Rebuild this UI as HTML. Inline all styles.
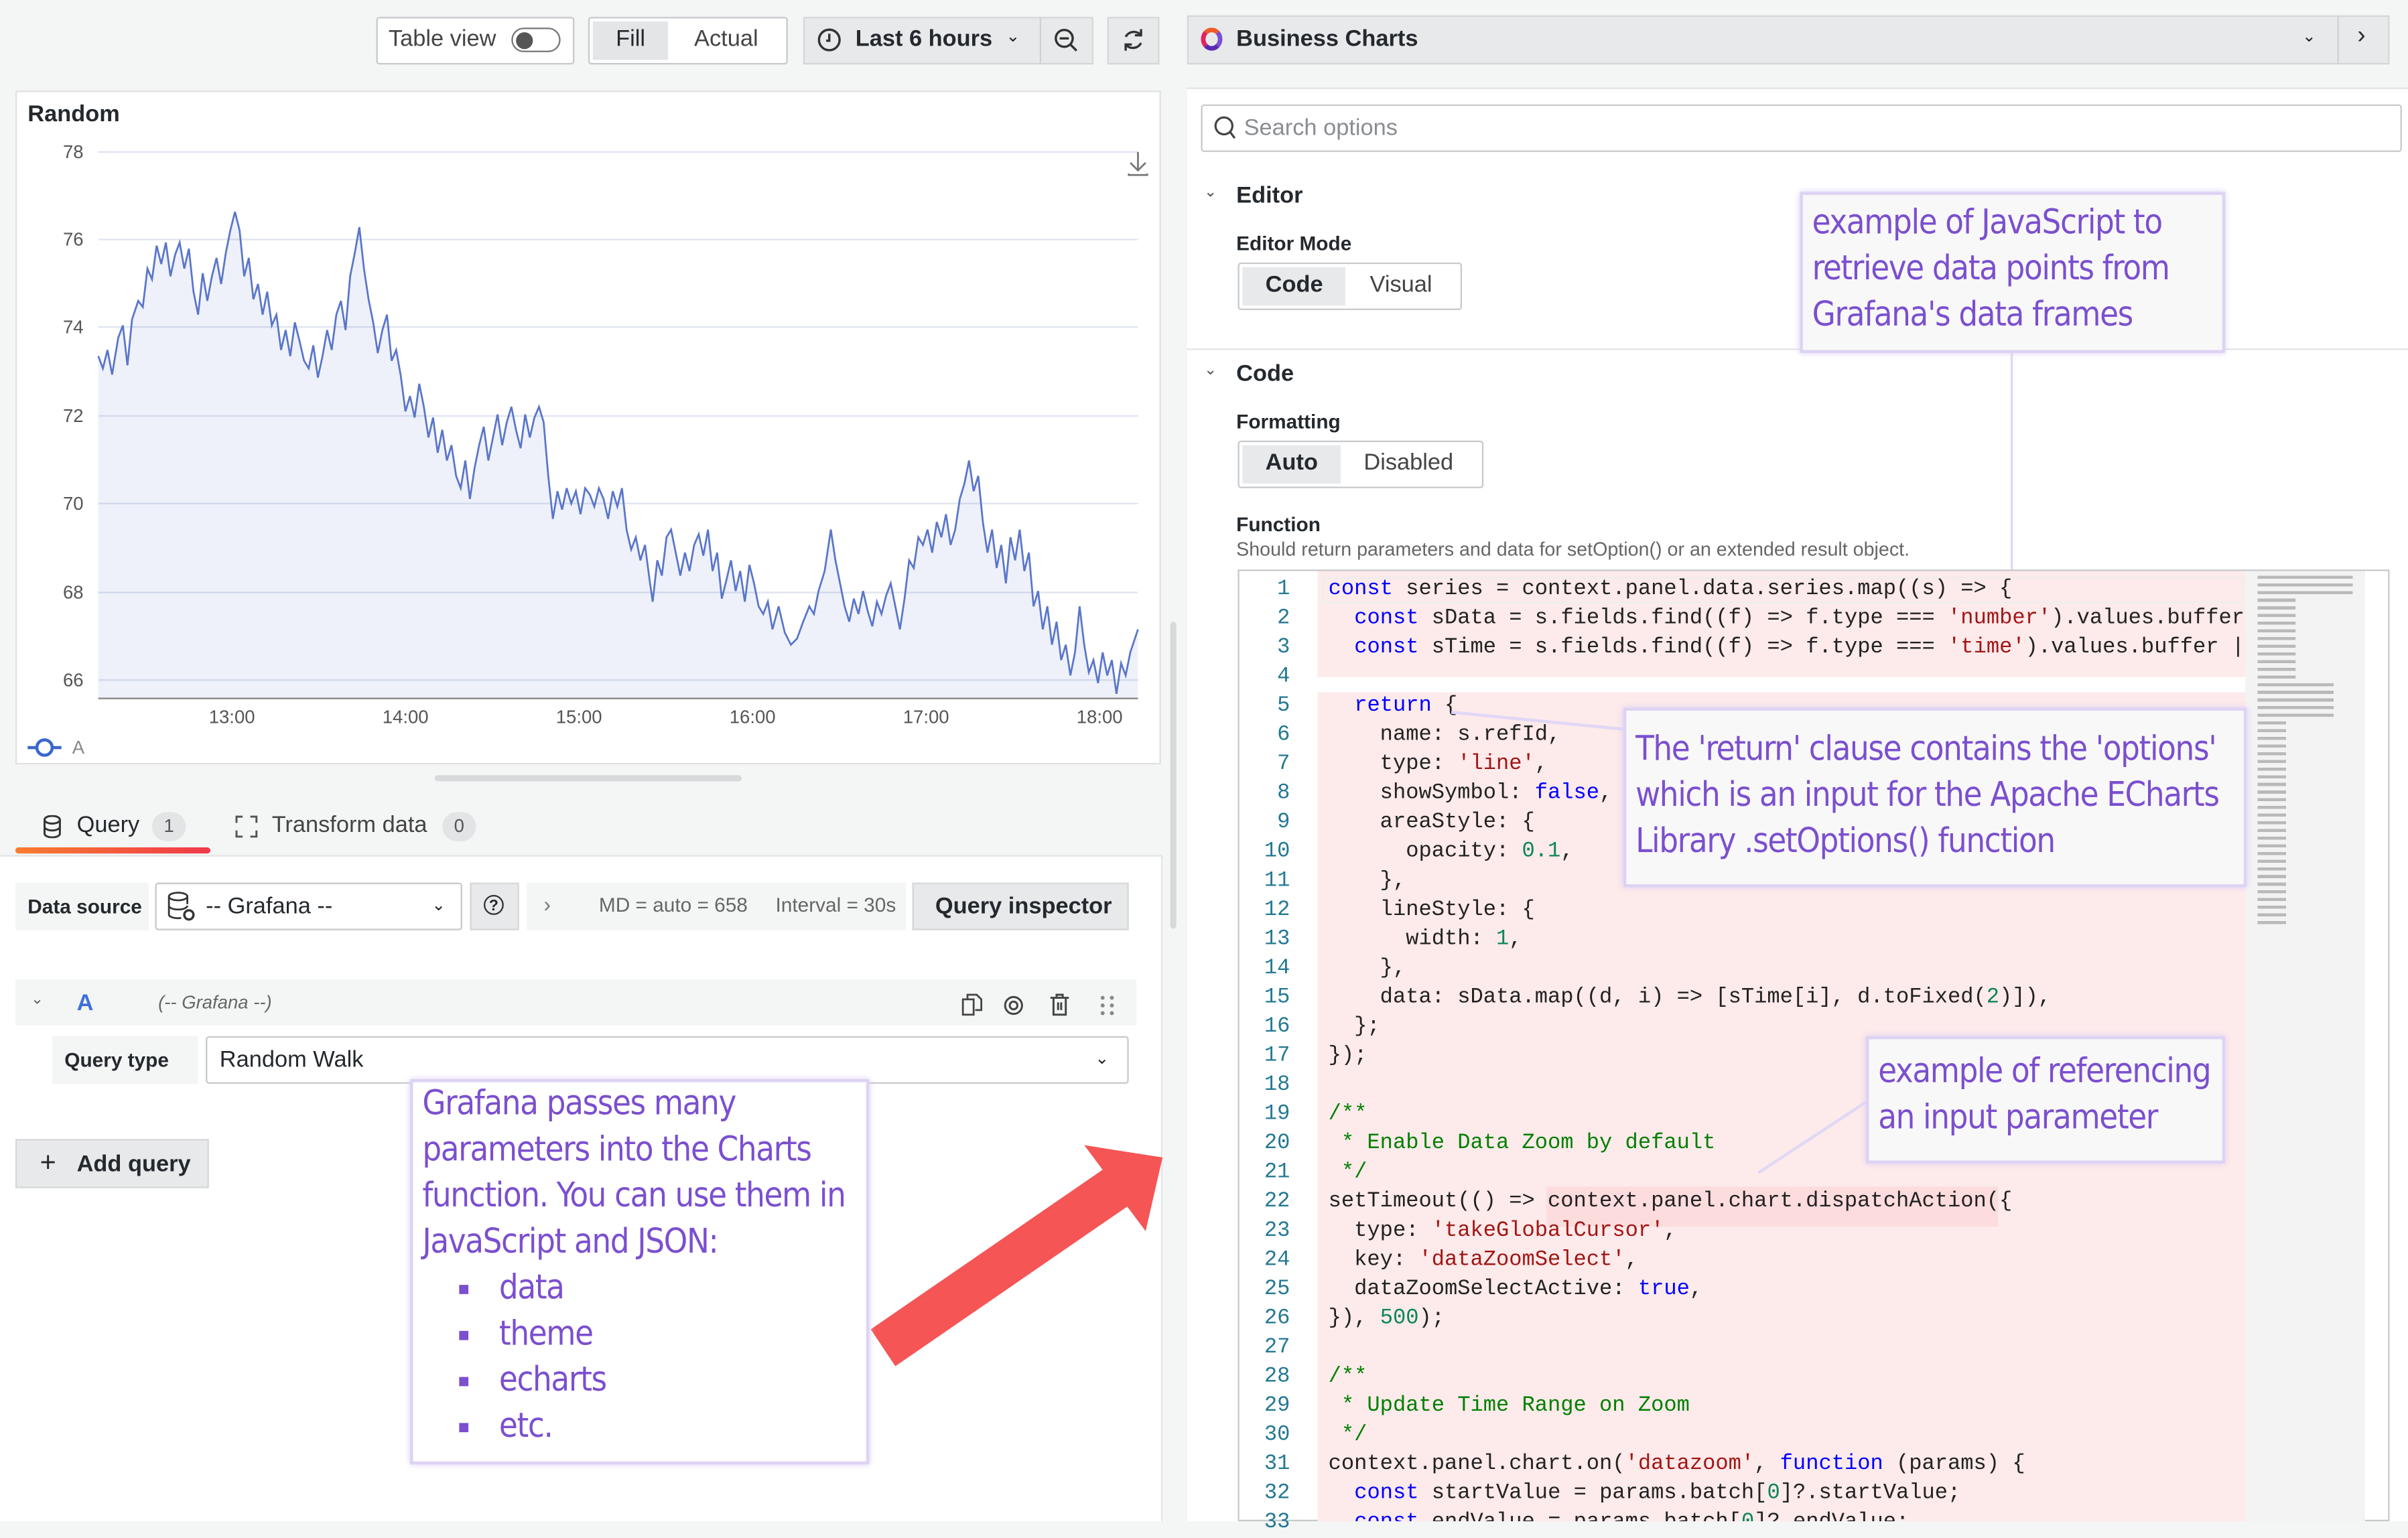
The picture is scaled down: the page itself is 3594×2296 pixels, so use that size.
<!DOCTYPE html>
<html><head><meta charset="utf-8">
<style>
html,body{margin:0;padding:0;width:3594px;height:2271px;overflow:hidden;background:#f4f5f5;}
#w{position:absolute;left:0;top:0;width:1568px;height:991px;transform:scale(2.29209,2.29163);transform-origin:0 0;font-family:"Liberation Sans",sans-serif;color:#24292e;font-size:14px;}
.a{position:absolute;box-sizing:border-box;}
.btn{background:#fff;border:1px solid #c7c9cc;border-radius:2px;}
.gb{background:#e8e9eb;border:1px solid #d6d7d9;}
.t{position:absolute;white-space:nowrap;}
.note{position:absolute;box-sizing:border-box;background:#f8f8f8;border:2px solid #ddd3f3;box-shadow:0 0 4px #d9ccf5;color:#7b4fcf;font-family:"DejaVu Sans Condensed","Liberation Sans Narrow","Liberation Sans",sans-serif;font-size:22px;line-height:30px;letter-spacing:-0.6px;padding:4px 6px;}
.code{position:absolute;font-family:"Liberation Mono",monospace;font-size:14px;line-height:19px;white-space:pre;color:#222;}
.ln{position:absolute;left:806px;width:34px;top:375px;text-align:right;font-family:"Liberation Mono",monospace;font-size:14px;line-height:19px;color:#237893;white-space:pre;}
.k{color:#0000ff}.s{color:#a31515}.n{color:#098658}.c{color:#008000}
.bl{display:block;height:30px;padding-left:24px;}
.bl b{display:inline-block;width:6px;height:6px;background:#7b4fcf;margin-right:20px;vertical-align:middle;}
</style></head><body><div id="w">
<!-- top toolbar -->
<div class="a btn" style="left:245px;top:11px;width:129px;height:31px;"></div>
<div class="t" style="left:253px;top:17px;font-size:15px;color:#444;">Table view</div>
<div class="a" style="left:333px;top:18px;width:32px;height:16px;border:1px solid #777;border-radius:9px;background:#fff;"></div>
<div class="a" style="left:336px;top:21px;width:11px;height:11px;border-radius:6px;background:#555;"></div>
<div class="a btn" style="left:383px;top:11px;width:130px;height:31px;"></div>
<div class="a" style="left:386px;top:14px;width:49px;height:25px;background:#e4e5e7;"></div>
<div class="t" style="left:401px;top:17px;font-size:15px;">Fill</div>
<div class="t" style="left:452px;top:17px;font-size:15px;color:#444;">Actual</div>
<div class="a gb" style="left:523px;top:11px;width:189px;height:31px;"></div>
<div class="a" style="left:677px;top:11px;width:1px;height:31px;background:#d0d1d3;"></div>
<svg class="a" style="left:532px;top:18px" width="17" height="17"><circle cx="8" cy="8" r="6.7" fill="none" stroke="#333" stroke-width="1.5"/><path d="M8 4 V8.5 H6" fill="none" stroke="#333" stroke-width="1.5"/></svg>
<div class="t" style="left:557px;top:17px;font-size:15px;font-weight:600;">Last 6 hours</div>
<div class="t" style="left:655px;top:17px;font-size:11px;">&#8964;</div>
<svg class="a" style="left:686px;top:18px" width="16" height="16"><circle cx="7" cy="7" r="5.5" fill="none" stroke="#333" stroke-width="1.5"/><line x1="4" y1="7" x2="10" y2="7" stroke="#333" stroke-width="1.5"/><line x1="11" y1="11" x2="15" y2="15" stroke="#333" stroke-width="1.5"/></svg>
<div class="a gb" style="left:721px;top:11px;width:34px;height:31px;"></div>
<svg class="a" style="left:730px;top:18px" width="16" height="16"><path d="M3 6 A6 6 0 0 1 13 5 M13 10 A6 6 0 0 1 3 11" fill="none" stroke="#333" stroke-width="1.5"/><path d="M13 1 V5 H9 M3 15 V11 H7" fill="none" stroke="#333" stroke-width="1.5"/></svg>
<div class="a gb" style="left:773px;top:10px;width:783px;height:32px;"></div>
<div class="a" style="left:1522px;top:10px;width:1px;height:32px;background:#d0d1d3;"></div>
<div class="a" style="left:782px;top:18px;width:14px;height:15px;border-radius:50%;border:3px solid;border-color:#f05a28 #7b4fcf #5a2ab5 #e0245e;"></div>
<div class="t" style="left:805px;top:17px;font-size:15px;font-weight:600;">Business Charts</div>
<div class="t" style="left:1499px;top:17px;font-size:11px;">&#8964;</div>
<div class="t" style="left:1535px;top:15px;font-size:16px;">&#8250;</div>

<!-- chart panel -->
<div class="a" style="left:10px;top:59px;width:746px;height:439px;background:#fff;border:1px solid #e0e1e3;"></div>
<div class="t" style="left:18px;top:66px;font-size:15px;font-weight:600;">Random</div>
<svg class="a" style="left:0;top:0" width="760" height="500">
<g stroke="#dfe4ef" stroke-width="1">
<line x1="64" y1="99" x2="741" y2="99"/><line x1="64" y1="156" x2="741" y2="156"/><line x1="64" y1="213" x2="741" y2="213"/><line x1="64" y1="271" x2="741" y2="271"/><line x1="64" y1="328" x2="741" y2="328"/><line x1="64" y1="386" x2="741" y2="386"/><line x1="64" y1="443" x2="741" y2="443"/></g>
<g font-family="Liberation Sans" font-size="12" fill="#555"><text x="41" y="103">78</text><text x="41" y="160">76</text><text x="41" y="217">74</text><text x="41" y="275">72</text><text x="41" y="332">70</text><text x="41" y="390">68</text><text x="41" y="447">66</text>
<text x="136" y="471">13:00</text><text x="249" y="471">14:00</text><text x="362" y="471">15:00</text><text x="475" y="471">16:00</text><text x="588" y="471">17:00</text><text x="701" y="471">18:00</text></g>
<path d="M64,232 L67,240 L70,228 L73,244 L77,220 L80,212 L83,238 L86,208 L90,196 L93,200 L96,175 L99,182 L102,160 L105,172 L108,158 L111,180 L114,166 L117,158 L120,175 L123,162 L126,190 L129,205 L132,178 L135,196 L138,180 L141,168 L144,185 L147,165 L150,150 L153,138 L156,150 L159,180 L162,168 L165,195 L168,185 L171,205 L174,190 L177,212 L180,205 L183,228 L186,215 L189,232 L192,210 L195,222 L198,235 L201,240 L204,225 L207,246 L210,232 L213,215 L216,228 L219,205 L222,196 L225,215 L228,180 L231,165 L234,148 L237,175 L240,195 L243,210 L246,230 L249,215 L252,205 L255,235 L258,228 L261,245 L264,268 L267,258 L270,272 L273,250 L276,265 L279,285 L282,272 L285,295 L288,280 L291,300 L294,290 L297,310 L300,318 L303,300 L306,325 L309,305 L312,290 L315,278 L318,300 L321,285 L324,270 L327,290 L330,275 L333,265 L336,280 L339,292 L342,270 L345,285 L348,272 L351,265 L354,275 L357,310 L360,338 L363,320 L366,332 L369,318 L372,328 L375,320 L378,335 L381,318 L384,322 L387,330 L390,318 L393,325 L396,338 L399,320 L402,330 L405,318 L408,345 L411,358 L414,350 L417,365 L420,355 L423,378 L425,392 L428,365 L431,375 L434,350 L437,345 L440,360 L443,375 L446,360 L449,372 L452,355 L455,348 L458,362 L461,345 L464,372 L467,360 L470,390 L473,378 L476,365 L479,385 L482,372 L485,392 L488,368 L491,380 L494,395 L497,400 L500,392 L503,410 L507,395 L511,412 L515,420 L519,416 L523,405 L527,395 L530,400 L533,385 L537,372 L541,345 L544,365 L547,380 L550,395 L553,405 L556,390 L559,400 L562,385 L565,398 L568,408 L571,392 L574,400 L577,388 L580,380 L583,395 L586,410 L589,390 L592,365 L595,370 L598,350 L601,355 L604,345 L607,360 L610,340 L613,350 L616,335 L619,355 L622,345 L625,325 L628,315 L631,300 L634,320 L637,310 L640,340 L643,360 L646,345 L649,370 L652,355 L655,380 L658,350 L661,365 L664,345 L667,372 L670,360 L673,395 L676,385 L679,410 L682,395 L685,420 L688,405 L691,430 L694,420 L697,440 L700,425 L703,395 L706,420 L709,438 L712,430 L715,445 L718,425 L721,440 L724,430 L727,452 L730,432 L733,440 L736,425 L741,410 L741,455 L64,455Z" fill="#5a76c9" fill-opacity="0.1" stroke="none"/>
<path d="M64,232 L67,240 L70,228 L73,244 L77,220 L80,212 L83,238 L86,208 L90,196 L93,200 L96,175 L99,182 L102,160 L105,172 L108,158 L111,180 L114,166 L117,158 L120,175 L123,162 L126,190 L129,205 L132,178 L135,196 L138,180 L141,168 L144,185 L147,165 L150,150 L153,138 L156,150 L159,180 L162,168 L165,195 L168,185 L171,205 L174,190 L177,212 L180,205 L183,228 L186,215 L189,232 L192,210 L195,222 L198,235 L201,240 L204,225 L207,246 L210,232 L213,215 L216,228 L219,205 L222,196 L225,215 L228,180 L231,165 L234,148 L237,175 L240,195 L243,210 L246,230 L249,215 L252,205 L255,235 L258,228 L261,245 L264,268 L267,258 L270,272 L273,250 L276,265 L279,285 L282,272 L285,295 L288,280 L291,300 L294,290 L297,310 L300,318 L303,300 L306,325 L309,305 L312,290 L315,278 L318,300 L321,285 L324,270 L327,290 L330,275 L333,265 L336,280 L339,292 L342,270 L345,285 L348,272 L351,265 L354,275 L357,310 L360,338 L363,320 L366,332 L369,318 L372,328 L375,320 L378,335 L381,318 L384,322 L387,330 L390,318 L393,325 L396,338 L399,320 L402,330 L405,318 L408,345 L411,358 L414,350 L417,365 L420,355 L423,378 L425,392 L428,365 L431,375 L434,350 L437,345 L440,360 L443,375 L446,360 L449,372 L452,355 L455,348 L458,362 L461,345 L464,372 L467,360 L470,390 L473,378 L476,365 L479,385 L482,372 L485,392 L488,368 L491,380 L494,395 L497,400 L500,392 L503,410 L507,395 L511,412 L515,420 L519,416 L523,405 L527,395 L530,400 L533,385 L537,372 L541,345 L544,365 L547,380 L550,395 L553,405 L556,390 L559,400 L562,385 L565,398 L568,408 L571,392 L574,400 L577,388 L580,380 L583,395 L586,410 L589,390 L592,365 L595,370 L598,350 L601,355 L604,345 L607,360 L610,340 L613,350 L616,335 L619,355 L622,345 L625,325 L628,315 L631,300 L634,320 L637,310 L640,340 L643,360 L646,345 L649,370 L652,355 L655,380 L658,350 L661,365 L664,345 L667,372 L670,360 L673,395 L676,385 L679,410 L682,395 L685,420 L688,405 L691,430 L694,420 L697,440 L700,425 L703,395 L706,420 L709,438 L712,430 L715,445 L718,425 L721,440 L724,430 L727,452 L730,432 L733,440 L736,425 L741,410" fill="none" stroke="#5a76c9" stroke-width="1.2"/>
<line x1="64" y1="455" x2="741" y2="455" stroke="#888" stroke-width="1"/>
<line x1="18" y1="487" x2="40" y2="487" stroke="#3a66cc" stroke-width="2"/><circle cx="29" cy="487" r="5" fill="#fff" stroke="#3a66cc" stroke-width="2"/>
<text x="47" y="491" font-family="Liberation Sans" font-size="12" fill="#888">A</text>
<path d="M741 99 V111 M736 106 L741 111 L746 106 M735 113 V114 H747 V113" fill="none" stroke="#777" stroke-width="1.2"/>
</svg>
<div class="a" style="left:283px;top:505px;width:200px;height:4px;border-radius:2px;background:#d8d9db;"></div>
<div class="a" style="left:762px;top:405px;width:4px;height:200px;border-radius:2px;background:#d8d9db;"></div>

<!-- tabs -->
<svg class="a" style="left:28px;top:531px" width="12" height="15"><ellipse cx="6" cy="3" rx="5" ry="2.5" fill="none" stroke="#333" stroke-width="1.3"/><path d="M1 3 V12 A5 2.5 0 0 0 11 12 V3 M1 7.5 A5 2.5 0 0 0 11 7.5" fill="none" stroke="#333" stroke-width="1.3"/></svg>
<div class="t" style="left:50px;top:529px;font-size:15px;">Query</div>
<div class="a" style="left:99px;top:529px;width:22px;height:19px;border-radius:10px;background:#e3e4e6;font-size:12px;text-align:center;line-height:19px;color:#555;">1</div>
<div class="a" style="left:10px;top:552px;width:127px;height:4px;background:linear-gradient(90deg,#f77c2f,#f0394a);border-radius:2px;"></div>
<svg class="a" style="left:153px;top:531px" width="15" height="15"><path d="M1 5 V1 H5 M10 1 H14 V5 M14 10 V14 H10 M5 14 H1 V10" fill="none" stroke="#555" stroke-width="1.3"/></svg>
<div class="t" style="left:177px;top:529px;font-size:15px;color:#444;">Transform data</div>
<div class="a" style="left:288px;top:529px;width:22px;height:19px;border-radius:10px;background:#e3e4e6;font-size:12px;text-align:center;line-height:19px;color:#555;">0</div>
<div class="a" style="left:0;top:557px;width:757px;height:434px;background:#fff;border-top:1px solid #e3e4e6;border-right:1px solid #e3e4e6;"></div>

<!-- datasource row -->
<div class="a" style="left:10px;top:575px;width:87px;height:31px;background:#f4f5f5;"></div>
<div class="t" style="left:18px;top:583px;font-size:13px;font-weight:600;">Data source</div>
<div class="a btn" style="left:101px;top:575px;width:200px;height:31px;"></div>
<svg class="a" style="left:108px;top:580px" width="22" height="22"><ellipse cx="8" cy="4" rx="6" ry="2.5" fill="none" stroke="#333" stroke-width="1.2"/><path d="M2 4 V16 A6 2.5 0 0 0 10 18 M14 4 V9 M2 10 A6 2.5 0 0 0 14 10" fill="none" stroke="#333" stroke-width="1.2"/><circle cx="15" cy="16" r="3" fill="none" stroke="#333" stroke-width="1.5"/></svg>
<div class="t" style="left:134px;top:582px;font-size:15px;">-- Grafana --</div>
<div class="t" style="left:281px;top:583px;font-size:11px;">&#8964;</div>
<div class="a gb" style="left:306px;top:575px;width:32px;height:31px;"></div>
<div class="a" style="left:315px;top:583px;width:13px;height:13px;border:1.4px solid #333;border-radius:50%;font-size:10px;text-align:center;line-height:13px;font-weight:bold;">?</div>
<div class="a" style="left:343px;top:575px;width:247px;height:31px;background:#f4f5f5;"></div>
<div class="t" style="left:354px;top:581px;font-size:14px;color:#777;">&#8250;</div>
<div class="t" style="left:390px;top:582px;font-size:13px;color:#666;">MD = auto = 658</div>
<div class="t" style="left:505px;top:582px;font-size:13px;color:#666;">Interval = 30s</div>
<div class="a gb" style="left:594px;top:575px;width:141px;height:31px;"></div>
<div class="t" style="left:609px;top:582px;font-size:15px;font-weight:600;">Query inspector</div>

<!-- query A -->
<div class="a" style="left:10px;top:638px;width:730px;height:30px;background:#f4f5f5;"></div>
<div class="t" style="left:20px;top:646px;font-size:10px;color:#666;">&#8964;</div>
<div class="t" style="left:50px;top:645px;font-size:15px;color:#3d71d9;font-weight:600;">A</div>
<div class="t" style="left:103px;top:646px;font-size:12px;color:#666;font-style:italic;">(-- Grafana --)</div>
<svg class="a" style="left:626px;top:647px" width="14" height="15"><path d="M4 4 V1 H10 L13 4 V11 H9 M1 4 H8 V14 H1 Z" fill="none" stroke="#444" stroke-width="1.2"/></svg>
<svg class="a" style="left:653px;top:648px" width="14" height="14"><circle cx="7" cy="7" r="5.5" fill="none" stroke="#444" stroke-width="1.3"/><circle cx="7" cy="7" r="2.5" fill="none" stroke="#444" stroke-width="1.3"/></svg>
<svg class="a" style="left:683px;top:647px" width="14" height="15"><path d="M1 3 H13 M5 3 V1 H9 V3 M3 3 V14 H11 V3 M6 6 V11 M8 6 V11" fill="none" stroke="#444" stroke-width="1.3"/></svg>
<svg class="a" style="left:716px;top:648px" width="10" height="15"><g fill="#888"><circle cx="2" cy="2" r="1.3"/><circle cx="8" cy="2" r="1.3"/><circle cx="2" cy="7" r="1.3"/><circle cx="8" cy="7" r="1.3"/><circle cx="2" cy="12" r="1.3"/><circle cx="8" cy="12" r="1.3"/></g></svg>
<div class="a" style="left:34px;top:675px;width:95px;height:31px;background:#f4f5f5;"></div>
<div class="t" style="left:42px;top:683px;font-size:13px;font-weight:600;">Query type</div>
<div class="a btn" style="left:134px;top:675px;width:601px;height:31px;"></div>
<div class="t" style="left:143px;top:682px;font-size:15px;">Random Walk</div>
<div class="t" style="left:713px;top:683px;font-size:11px;">&#8964;</div>
<div class="a gb" style="left:10px;top:742px;width:126px;height:32px;"></div>
<div class="t" style="left:26px;top:747px;font-size:18px;">+</div>
<div class="t" style="left:50px;top:750px;font-size:15px;font-weight:600;">Add query</div>

<!-- right panel -->
<div class="a" style="left:773px;top:57px;width:795px;height:934px;background:#fff;border-top:1px solid #e3e4e6;"></div>
<div class="a btn" style="left:782px;top:68px;width:782px;height:31px;"></div>
<svg class="a" style="left:790px;top:75px" width="16" height="17"><circle cx="7" cy="7" r="5.5" fill="none" stroke="#444" stroke-width="1.4"/><line x1="11" y1="11" x2="14" y2="15" stroke="#444" stroke-width="1.4"/></svg>
<div class="t" style="left:810px;top:75px;font-size:15px;color:#8a8d91;">Search options</div>
<div class="t" style="left:784px;top:120px;font-size:10px;color:#555;">&#8964;</div>
<div class="t" style="left:805px;top:119px;font-size:15px;font-weight:600;">Editor</div>
<div class="t" style="left:805px;top:151px;font-size:13px;font-weight:600;">Editor Mode</div>
<div class="a btn" style="left:806px;top:171px;width:146px;height:31px;"></div>
<div class="a" style="left:809px;top:174px;width:67px;height:25px;background:#e8e9eb;"></div>
<div class="t" style="left:824px;top:177px;font-size:15px;font-weight:600;">Code</div>
<div class="t" style="left:892px;top:177px;font-size:15px;color:#444;">Visual</div>
<div class="a" style="left:773px;top:227px;width:795px;height:1px;background:#e3e4e6;"></div>
<div class="t" style="left:784px;top:236px;font-size:10px;color:#555;">&#8964;</div>
<div class="t" style="left:805px;top:235px;font-size:15px;font-weight:600;">Code</div>
<div class="t" style="left:805px;top:267px;font-size:13px;font-weight:600;">Formatting</div>
<div class="a btn" style="left:806px;top:287px;width:160px;height:31px;"></div>
<div class="a" style="left:809px;top:290px;width:64px;height:25px;background:#e8e9eb;"></div>
<div class="t" style="left:824px;top:293px;font-size:15px;font-weight:600;">Auto</div>
<div class="t" style="left:888px;top:293px;font-size:15px;color:#444;">Disabled</div>
<div class="t" style="left:805px;top:334px;font-size:13px;font-weight:600;">Function</div>
<div class="t" style="left:805px;top:351px;font-size:12.5px;color:#666;">Should return parameters and data for setOption() or an extended result object.</div>

<!-- code editor -->
<div class="a" style="left:806px;top:371px;width:750px;height:620px;background:#fff;border:1px solid #c7c9cc;"></div>
<div class="a" style="left:858px;top:372px;width:604px;height:69px;background:#fdeaea;"></div>
<div class="a" style="left:858px;top:451px;width:604px;height:540px;background:#fdeaea;"></div>
<div class="a" style="left:1007px;top:773px;width:294px;height:26px;background:#fcdcdc;"></div>
<div class="a" style="left:861px;top:376px;width:600px;height:17px;border:1px solid #eee;"></div>
<div class="a" style="left:1462px;top:372px;width:78px;height:619px;background:#f3f3f3;"></div>
<div class="a" style="left:1470px;top:375px;width:62px;height:230px;background:repeating-linear-gradient(180deg,#8a8a8a 0 2px,transparent 2px 5px);opacity:.55;clip-path:polygon(0 0,100% 0,100% 6%,40% 6%,40% 30%,80% 30%,80% 40%,30% 40%,30% 100%,0 100%);"></div>
<div class="ln">1
2
3
4
5
6
7
8
9
10
11
12
13
14
15
16
17
18
19
20
21
22
23
24
25
26
27
28
29
30
31
32
33</div>
<div class="a" style="left:858px;top:372px;width:604px;height:619px;overflow:hidden;"><div class="code" style="left:7px;top:3px;"><span class="k">const</span> series = context.panel.data.series.map((s) =&gt; {
  <span class="k">const</span> sData = s.fields.find((f) =&gt; f.type === <span class="s">'number'</span>).values.buffer || 
  <span class="k">const</span> sTime = s.fields.find((f) =&gt; f.type === <span class="s">'time'</span>).values.buffer || 

  <span class="k">return</span> {
    name: s.refId,
    type: <span class="s">'line'</span>,
    showSymbol: <span class="k">false</span>,
    areaStyle: {
      opacity: <span class="n">0.1</span>,
    },
    lineStyle: {
      width: <span class="n">1</span>,
    },
    data: sData.map((d, i) =&gt; [sTime[i], d.toFixed(<span class="n">2</span>)]),
  };
});

<span class="c">/**</span>
<span class="c"> * Enable Data Zoom by default</span>
<span class="c"> */</span>
setTimeout(() =&gt; context.panel.chart.dispatchAction({
  type: <span class="s">'takeGlobalCursor'</span>,
  key: <span class="s">'dataZoomSelect'</span>,
  dataZoomSelectActive: <span class="k">true</span>,
}), <span class="n">500</span>);

<span class="c">/**</span>
<span class="c"> * Update Time Range on Zoom</span>
<span class="c"> */</span>
context.panel.chart.on(<span class="s">'datazoom'</span>, <span class="k">function</span> (params) {
  <span class="k">const</span> startValue = params.batch[<span class="n">0</span>]?.startValue;
  <span class="k">const</span> endValue = params.batch[<span class="n">0</span>]?.endValue;</div></div>

<!-- connectors -->
<svg class="a" style="left:0;top:0" width="1568" height="991">
<line x1="1310" y1="229" x2="1310" y2="371" stroke="#e0d8f5" stroke-width="1.5"/>
<line x1="945" y1="464" x2="1057" y2="475" stroke="#e0d8f5" stroke-width="2"/>
<line x1="1145" y1="764" x2="1215" y2="718" stroke="#e0d8f5" stroke-width="2"/>
<polygon points="567,866 718,762 706,746 757,754 746,802 734,786 583,890" fill="#f65555"/>
</svg>

<!-- annotations -->
<div class="note" style="left:1172px;top:125px;width:277px;height:105px;">example of JavaScript to<br>retrieve data points from<br>Grafana's data frames</div>
<div class="note" style="left:1057px;top:461px;width:406px;height:117px;padding-top:11px;">The 'return' clause contains the 'options'<br>which is an input for the Apache ECharts<br>Library .setOptions() function</div>
<div class="note" style="left:1215px;top:675px;width:234px;height:83px;padding-top:7px;">example of referencing<br>an input parameter</div>
<div class="note" style="left:267px;top:703px;width:299px;height:251px;background:#fff;padding-top:0;">Grafana passes many<br>parameters into the Charts<br>function. You can use them in<br>JavaScript and JSON:<span class="bl"><b></b>data</span><span class="bl"><b></b>theme</span><span class="bl"><b></b>echarts</span><span class="bl"><b></b>etc.</span></div>
</div></body></html>
